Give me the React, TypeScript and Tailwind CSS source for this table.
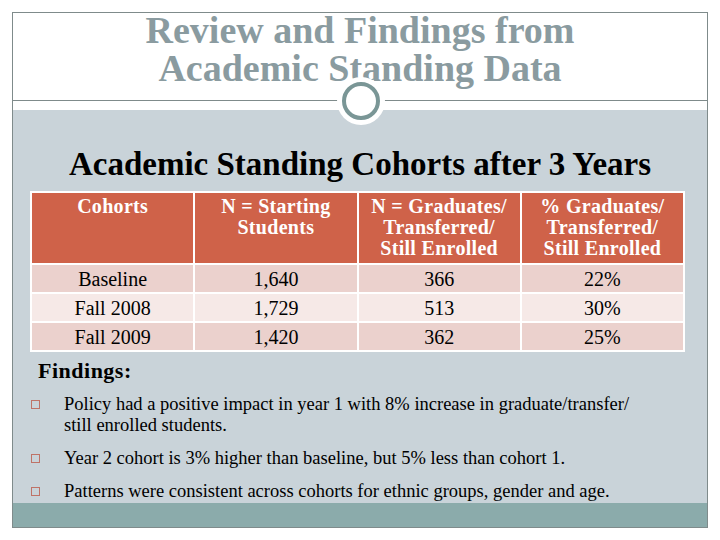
import React from "react";

const header = [
  "Cohorts",
  "N = Starting\nStudents",
  "N = Graduates/\nTransferred/\nStill Enrolled",
  "% Graduates/\nTransferred/\nStill Enrolled",
];

const rows = [
  ["Baseline", "1,640", "366", "22%"],
  ["Fall 2008", "1,729", "513", "30%"],
  ["Fall 2009", "1,420", "362", "25%"],
];

const findings = [
  "Policy had a positive impact in year 1 with 8% increase in graduate/transfer/\nstill enrolled students.",
  "Year 2 cohort is 3% higher than baseline, but 5% less than cohort 1.",
  "Patterns were consistent across cohorts for ethnic groups, gender and age.",
];

function Bullet({ text }: { text: string }) {
  return (
    <li className="flex items-start gap-[24px]">
      <span className="mt-[6px] h-[9px] w-[9px] shrink-0 border border-[#bf7367]" />
      <span className="whitespace-pre-line text-[18.5px] leading-[21px] text-black">{text}</span>
    </li>
  );
}

export default function App() {
  return (
    <div className="h-[540px] w-[720px] bg-white pl-[12px] pt-[12px] font-['Liberation_Serif','DejaVu_Serif',serif]">
      <div className="relative flex h-[516px] w-[696px] flex-col border border-[#7f8b8b]">
        <div className="flex h-[88px] flex-col items-center border-b border-[#7f8b8b] text-[38px] font-bold leading-[38px] text-[#8a9ba0]">
          <div className="-mt-[2px]">Review and Findings from</div>
          <div>Academic Standing Data</div>
        </div>
        <div className="h-[9px] bg-white" />
        <div className="flex flex-1 flex-col bg-[#c9d3d9]">
          <h2 className="pt-[37px] text-center text-[33px] font-bold leading-[34px] text-black">
            Academic Standing Cohorts after 3 Years
          </h2>
          <table className="ml-[17px] mt-[10px] w-[655px] border-collapse text-center">
            <thead>
              <tr className="h-[72px] bg-[#cf6249]">
                {header.map((h) => (
                  <th
                    key={h}
                    className="w-1/4 border-2 border-white px-1 pt-[3px] align-top text-[20px] font-bold leading-[21px] tracking-[0.3px] whitespace-pre-line text-white"
                  >
                    {h}
                  </th>
                ))}
              </tr>
            </thead>
            <tbody>
              {rows.map((r, i) => (
                <tr key={r[0]} className={i % 2 === 1 ? "h-[29px] bg-[#f6e9e7]" : "h-[29px] bg-[#ebd1cd]"}>
                  {r.map((c) => (
                    <td key={c} className="border-2 border-white text-[20px] leading-[20px] text-black">
                      {c}
                    </td>
                  ))}
                </tr>
              ))}
            </tbody>
          </table>
          <div className="ml-[25px] mt-[7px] text-[22px] font-bold leading-[24px] tracking-[0.5px] text-black">
            Findings:
          </div>
          <ul className="ml-[18px] mr-[10px] mt-[11px] flex flex-col gap-[12px]">
            {findings.map((f) => (
              <Bullet key={f} text={f} />
            ))}
          </ul>
        </div>
        <div className="h-[24px] bg-[#8babab]" />
        <div className="absolute left-[324px] top-[64px] flex h-[48px] w-[48px] items-center justify-center rounded-full bg-white">
          <div className="h-[38px] w-[38px] rounded-full border-[4px] border-[#7a9696]" />
        </div>
      </div>
    </div>
  );
}
